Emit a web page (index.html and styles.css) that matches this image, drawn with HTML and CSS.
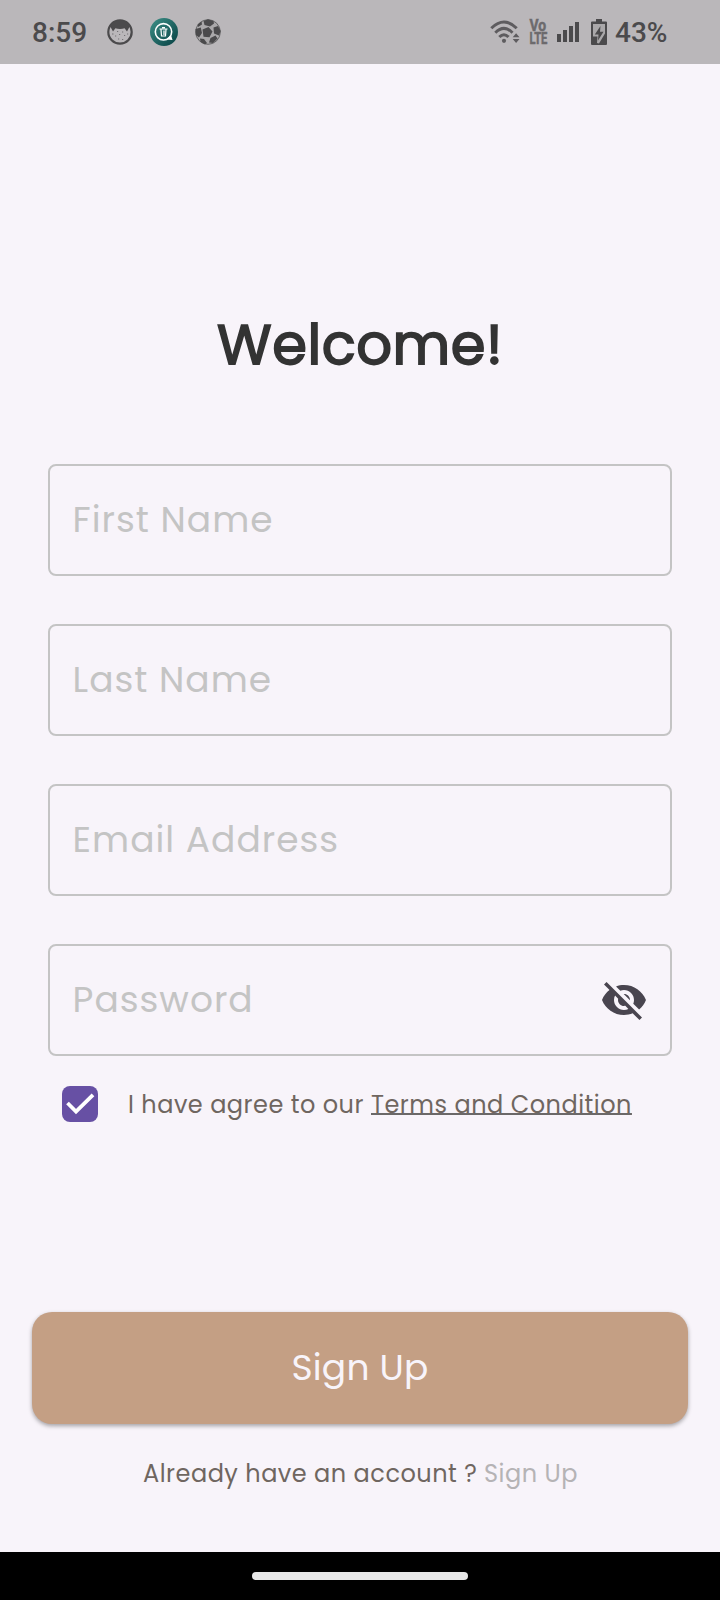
FILE: index.html
```html
<!DOCTYPE html>
<html lang="en">
<head>
<meta charset="utf-8">
<title>Sign Up</title>
<link rel="stylesheet" href="styles.css">
</head>
<body>
<div class="screen">
  <header class="status">
    <span class="status-time">8:59</span>
    <svg class="icon-cat" width="26" height="26" viewBox="0 0 26 26">
      <circle cx="13" cy="13" r="11.7" fill="#bab7ba" stroke="#4b4a4c" stroke-width="2.2"/>
      <path d="M3 7C7 0 19 0 23 7L20 12.500 17.600 9.300C15 10.300 11 10.300 8.400 9.300L6 12.500Z" fill="#4b4a4c"/>
      <path d="M5 15h1.500M10 12.500h1.200M15 13h1.200M20 15h1.200M8 17h1.200M12 15.500h1.200M17 16.500h1.200M11 20h1.200M15 20.500h1.200" stroke="#757376" stroke-width="1.200"/>
    </svg>
    <svg class="icon-chat" width="28" height="28" viewBox="0 0 28 28">
      <defs><linearGradient id="teal" x1="0" y1="0" x2="1" y2="1"><stop offset="0" stop-color="#3e9188"/><stop offset="1" stop-color="#063f42"/></linearGradient></defs>
      <circle cx="14" cy="14" r="14" fill="url(#teal)"/>
      <circle cx="13.500" cy="13.800" r="8.200" fill="none" stroke="#fff" stroke-width="1.600"/>
      <path d="M16.500 21.500L21 17l1.500 5Z" fill="#fff"/>
      <path d="M9.500 11h8M12 9.700h3M11 11.500l.5 6.500h4l.5-6.500M14 12.500v4.500" fill="none" stroke="#fff" stroke-width="1.200"/>
    </svg>
    <svg class="icon-ball" width="26" height="26" viewBox="0 0 26 26">
      <circle cx="13" cy="13" r="12.800" fill="#aaa8aa"/>
      <path d="M8.500 2L13 .3 18.500 2 19 4.500 15 7.500 9.500 6ZM7.500 10.500L13.500 8 17.500 12.500 14.500 18.300 8.500 17.800ZM.5 10L5.800 8.500 7 14 4 18.500 .8 16ZM18.500 8.500L23 7 25.700 12 24 16.500 19 14.500ZM15.500 19L20.500 16.500 22.500 19.500 18 24 14 23.500ZM5 19.500L9 20 12 24 10 25.500 5.500 23ZM2.500 5.500L6.500 2.500 7 5.500 3 8Z" fill="#4b4a4c"/>
      <circle cx="13" cy="13" r="12.300" fill="none" stroke="#4b4a4c" stroke-width=".7"/>
    </svg>
    <svg class="icon-wifi" width="30" height="24" viewBox="0 0 30 24">
      <g fill="none" stroke="#5e5c5f" stroke-width="3"><path d="M1.300 8.200Q14 -4.200 26.700 8.200"/><path d="M5.300 12.700Q14 4.200 22.500 12.700"/><path d="M9.300 17Q14 12.400 18.500 17"/></g>
      <circle cx="14" cy="20.800" r="2.100" fill="#5e5c5f"/>
      <path d="M22.700 17.300l3.400-4 3.400 4ZM22.700 19l3.400 4 3.400-4Z" fill="#5e5c5f"/>
    </svg>
    <svg class="icon-volte" width="20" height="26" viewBox="0 0 20 26">
      <text class="volte" x="1.400" y="12.200" textLength="16.600" lengthAdjust="spacingAndGlyphs">Vo</text>
      <text class="volte" x="1.400" y="24.900" textLength="18" lengthAdjust="spacingAndGlyphs">LTE</text>
    </svg>
    <svg class="icon-signal" width="22" height="20" viewBox="0 0 22 20">
      <path d="M0 12h4v8H0zM6 8h4v12H6zM12 4h4v16h-4zM18 0h4v20h-4z" fill="#4b4a4c"/>
    </svg>
    <svg class="icon-battery" width="16" height="26" viewBox="0 0 16 26">
      <path d="M5 0h6v2.500h4Q16 2.500 16 3.500V25Q16 26 15 26H1Q0 26 0 25V3.500Q0 2.500 1 2.500H5Z" fill="#4b4a4c"/>
      <path d="M2 5H14V14.500L8 24.500 6 24 6.500 17.500 2 17.500Z" fill="#aaa8aa"/>
      <path d="M9.500 7L3.800 15.500H7.500L7 21.500 12.500 12.800H9Z" fill="#4b4a4c"/>
    </svg>
    <span class="status-percent">43%</span>
  </header>

  <main class="content">
    <h1 class="title">Welcome!</h1>
    <form class="form">
      <div class="field"><span class="hint">First Name</span></div>
      <div class="field"><span class="hint">Last Name</span></div>
      <div class="field"><span class="hint">Email Address</span></div>
      <div class="field">
        <span class="hint">Password</span>
        <svg class="icon-eye" width="48" height="48" viewBox="0 0 24 24"><path fill="#49454f" d="M12 7c2.760 0 5 2.240 5 5 0 .65-.13 1.260-.36 1.830l2.920 2.920c1.510-1.260 2.700-2.890 3.430-4.750-1.730-4.390-6-7.500-11-7.500-1.400 0-2.740.25-3.980.7l2.160 2.160C10.740 7.130 11.350 7 12 7zM2 4.270l2.280 2.280.46.46C3.080 8.300 1.780 10.020 1 12c1.730 4.390 6 7.500 11 7.500 1.550 0 3.030-.3 4.380-.84l.42.42L19.730 22 21 20.730 3.270 3 2 4.270zM7.530 9.800l1.550 1.550c-.05.21-.08.43-.08.65 0 1.660 1.340 3 3 3 .22 0 .44-.03.65-.08l1.550 1.550c-.67.33-1.410.53-2.200.53-2.760 0-5-2.240-5-5 0-.79.2-1.530.53-2.200zm4.310-.78l3.150 3.150.02-.16c0-1.660-1.340-3-3-3l-.17.010z"/></svg>
      </div>
      <div class="agree">
        <span class="checkbox"><svg width="36" height="36" viewBox="0 0 36 36"><path d="M5.500 17L14 25.500 31 8.800" fill="none" stroke="#fff" stroke-width="3.800"/></svg></span>
        <span class="agree-text">I have agree to our</span>
        <a class="terms">Terms and Condition</a>
      </div>
    </form>
    <div class="button"><span class="button-label">Sign Up</span></div>
    <p class="account"><span class="account-text">Already have an account ?</span><a class="account-link">Sign Up</a></p>
  </main>
  <footer class="nav"><div class="nav-pill"></div></footer>
</div>
</body>
</html>
```
FILE: styles.css
```css
* { box-sizing: border-box; }
body { margin: 0; }
.screen {
  width: 720px;
  height: 1600px;
  display: flex;
  flex-direction: column;
  background: #f8f4fa;
  font-family: Poppins, Inter, "Open Sans", sans-serif;
  white-space: nowrap;
}
.screen svg { display: block; flex: none; overflow: visible; }
.status {
  height: 64px;
  flex: none;
  display: flex;
  align-items: center;
  padding-left: 32px;
  background: #bab7ba;
  color: #4b4a4c;
  font: 500 28px/64px Roboto, sans-serif;
}
.status-time { width: 75px; padding-top: 2px; }
.icon-chat { margin-left: 17px; }
.icon-ball { margin-left: 17px; }
.icon-wifi { margin-left: 269px; }
.icon-volte { margin-left: 8px; }
.volte { font: 700 16px/1 Roboto, sans-serif; fill: #6c6a6d; stroke: #6c6a6d; stroke-width: .5px; }
.icon-signal { margin-left: 9px; }
.icon-battery { margin-left: 12px; }
.status-percent { margin-left: 8px; padding-top: 2px; }
.content { flex: 1; display: flex; flex-direction: column; }
.title {
  margin: 243px 0 0 217px;
  height: 157px;
  font-size: 56px;
  font-weight: 400;
  line-height: 76px;
  letter-spacing: .5px;
  color: #333;
  -webkit-text-stroke: 1.75px #333;
}
.form { display: flex; flex-direction: column; gap: 48px; padding: 0 48px; }
.field {
  height: 112px;
  display: flex;
  align-items: center;
  justify-content: space-between;
  padding: 0 22px;
  border: 2px solid #c4c4c4;
  border-radius: 8px;
}
.hint { font-size: 36px; line-height: 54px; letter-spacing: 1px; margin-left: .6px; color: #c4c4c4; }
.agree { display: flex; align-items: center; margin-top: -18px; height: 36px; padding-left: 14px; color: #6f6660; font-size: 24px; letter-spacing: .5px; }
.checkbox { width: 36px; height: 36px; border-radius: 8px; background: #6750a4; }
.agree-text { width: 243px; margin-left: 30px; }
.terms { text-decoration: underline; text-decoration-color: #6b6868; text-decoration-thickness: 2px; text-underline-offset: 0; text-decoration-skip-ink: none; }
.button {
  height: 112px;
  margin: 190px 32px 0;
  display: flex;
  align-items: center;
  justify-content: center;
  border-radius: 20px;
  background: #c49f84;
  box-shadow: 0 2px 4px rgba(0, 0, 0, .34);
}
.button-label { font-size: 36px; letter-spacing: .2px; margin-top: -2px; color: #f8f4fa; }
.account { display: flex; margin: 32px 0 0 143px; font-size: 24px; letter-spacing: .5px; line-height: 36px; color: #6f6660; }
.account-text { width: 341px; }
.account-link { color: #b5b3b5; }
.nav { height: 48px; flex: none; display: flex; align-items: center; justify-content: center; background: #000; }
.nav-pill { width: 216px; height: 8px; border-radius: 4px; background: #e8e8e8; }
```
